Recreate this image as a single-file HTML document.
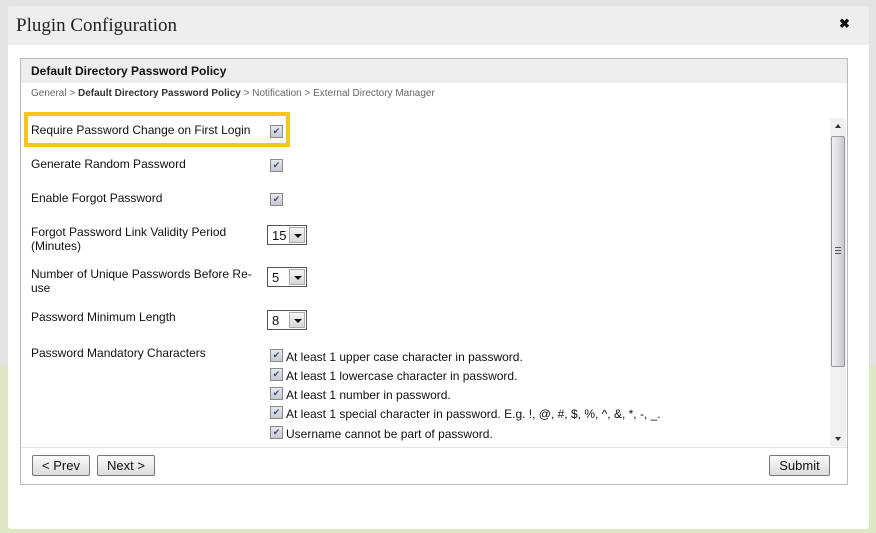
<!DOCTYPE html>
<html><head><meta charset="utf-8"><style>
*{margin:0;padding:0;box-sizing:border-box}
body{width:876px;height:533px;overflow:hidden;background:linear-gradient(#e3e3e3 0,#e3e3e3 365px,#dde6c5 365px);font-family:"Liberation Sans",Arial,sans-serif;font-size:12px;color:#111;position:relative}
.a{position:absolute}
.dlg{left:8px;top:6px;width:861px;height:523px;background:#fff;border-radius:3px}
.tb{left:8px;top:6px;width:861px;height:39px;background:#eee;border-radius:3px 3px 0 0}
.title{left:16px;top:15px;font-family:"Liberation Serif",serif;font-size:19px;color:#222}
.x{left:839px;top:16px;font-size:13px;font-weight:bold}
.panel{left:20px;top:58px;width:828px;height:427px;border:1px solid #bbb;background:#fff}
.ph{left:21px;top:59px;width:826px;height:24px;background:#eee}
.cb{width:13px;height:13px;border:1px solid #8a8a8a;background:linear-gradient(#e8e8ee,#c8c8d4);color:#3a4a7a;font-size:9px;line-height:11px;text-align:center}
.sel{width:40px;height:20px;border:1px solid #555;background:#fff;font-size:13px;padding:2px 0 0 4px}
.sel i{position:absolute;right:1px;top:1px;width:16px;height:16px;background:linear-gradient(#f4f4f4,#d8d8d8);border:1px solid #aaa}
.sel i:after{content:"";position:absolute;left:4px;top:6px;border:4px solid transparent;border-top:4px solid #111;border-bottom:0}
.btn{height:21px;border:1px solid #777;border-radius:2px;background:linear-gradient(#fafafa,#dcdcdc);font-size:13px;text-align:center;line-height:19px}
.lbl{left:31px;font-size:12px}
</style></head><body>
<div class="a dlg"></div>
<div class="a tb"></div>
<div class="a title">Plugin Configuration</div>
<div class="a x">✖</div>
<div class="a panel"></div>
<div class="a ph"></div>
<div class="a" style="left:31px;top:64px;font-weight:bold;font-size:12px">Default Directory Password Policy</div>
<div class="a" style="left:31px;top:88px;font-size:10px;color:#666">General &gt; <b style="color:#333">Default Directory Password Policy</b> &gt; Notification &gt; External Directory Manager</div>
<div class="a" style="left:24px;top:112px;width:266px;height:35px;border:4px solid #f5c518"></div>
<div class="a lbl" style="top:123px">Require Password Change on First Login</div>
<div class="a cb" style="left:270px;top:125px">✔</div>
<div class="a lbl" style="top:157px">Generate Random Password</div>
<div class="a cb" style="left:270px;top:159px">✔</div>
<div class="a lbl" style="top:191px">Enable Forgot Password</div>
<div class="a cb" style="left:270px;top:193px">✔</div>
<div class="a lbl" style="top:225px;line-height:14px">Forgot Password Link Validity Period<br>(Minutes)</div>
<div class="a sel" style="left:267px;top:225px">15<i></i></div>
<div class="a lbl" style="top:267px;line-height:14px">Number of Unique Passwords Before Re-<br>use</div>
<div class="a sel" style="left:267px;top:267px">5<i></i></div>
<div class="a lbl" style="top:310px">Password Minimum Length</div>
<div class="a sel" style="left:267px;top:310px">8<i></i></div>
<div class="a lbl" style="top:346px">Password Mandatory Characters</div>
<div class="a cb" style="left:270px;top:349px">✔</div><div class="a" style="left:286px;top:350px">At least 1 upper case character in password.</div>
<div class="a cb" style="left:270px;top:368px">✔</div><div class="a" style="left:286px;top:369px">At least 1 lowercase character in password.</div>
<div class="a cb" style="left:270px;top:387px">✔</div><div class="a" style="left:286px;top:388px">At least 1 number in password.</div>
<div class="a cb" style="left:270px;top:406px">✔</div><div class="a" style="left:286px;top:407px">At least 1 special character in password. E.g. !, @, #, $, %, ^, &amp;, *, -, _.</div>
<div class="a cb" style="left:270px;top:426px">✔</div><div class="a" style="left:286px;top:427px">Username cannot be part of password.</div>
<div class="a" style="left:830px;top:118px;width:16px;height:328px;background:#f0f0f0"></div>
<div class="a" style="left:835px;top:124px;border:3px solid transparent;border-bottom:4px solid #333;border-top:0"></div>
<div class="a" style="left:835px;top:437px;border:3px solid transparent;border-top:4px solid #333;border-bottom:0"></div>
<div class="a" style="left:831px;top:136px;width:14px;height:231px;border:1px solid #999;border-radius:2px;background:linear-gradient(90deg,#f2f2f4,#c8c8d0)"></div>
<div class="a" style="left:835px;top:247px;width:6px;height:7px;border-top:1px solid #555;border-bottom:1px solid #555"><div style="margin-top:2px;border-top:1px solid #555"></div></div>
<div class="a" style="left:21px;top:447px;width:826px;height:1px;background:#e4e4e4"></div>
<div class="a btn" style="left:32px;top:455px;width:58px">&lt; Prev</div>
<div class="a btn" style="left:97px;top:455px;width:58px">Next &gt;</div>
<div class="a btn" style="left:769px;top:455px;width:61px">Submit</div>
</body></html>
